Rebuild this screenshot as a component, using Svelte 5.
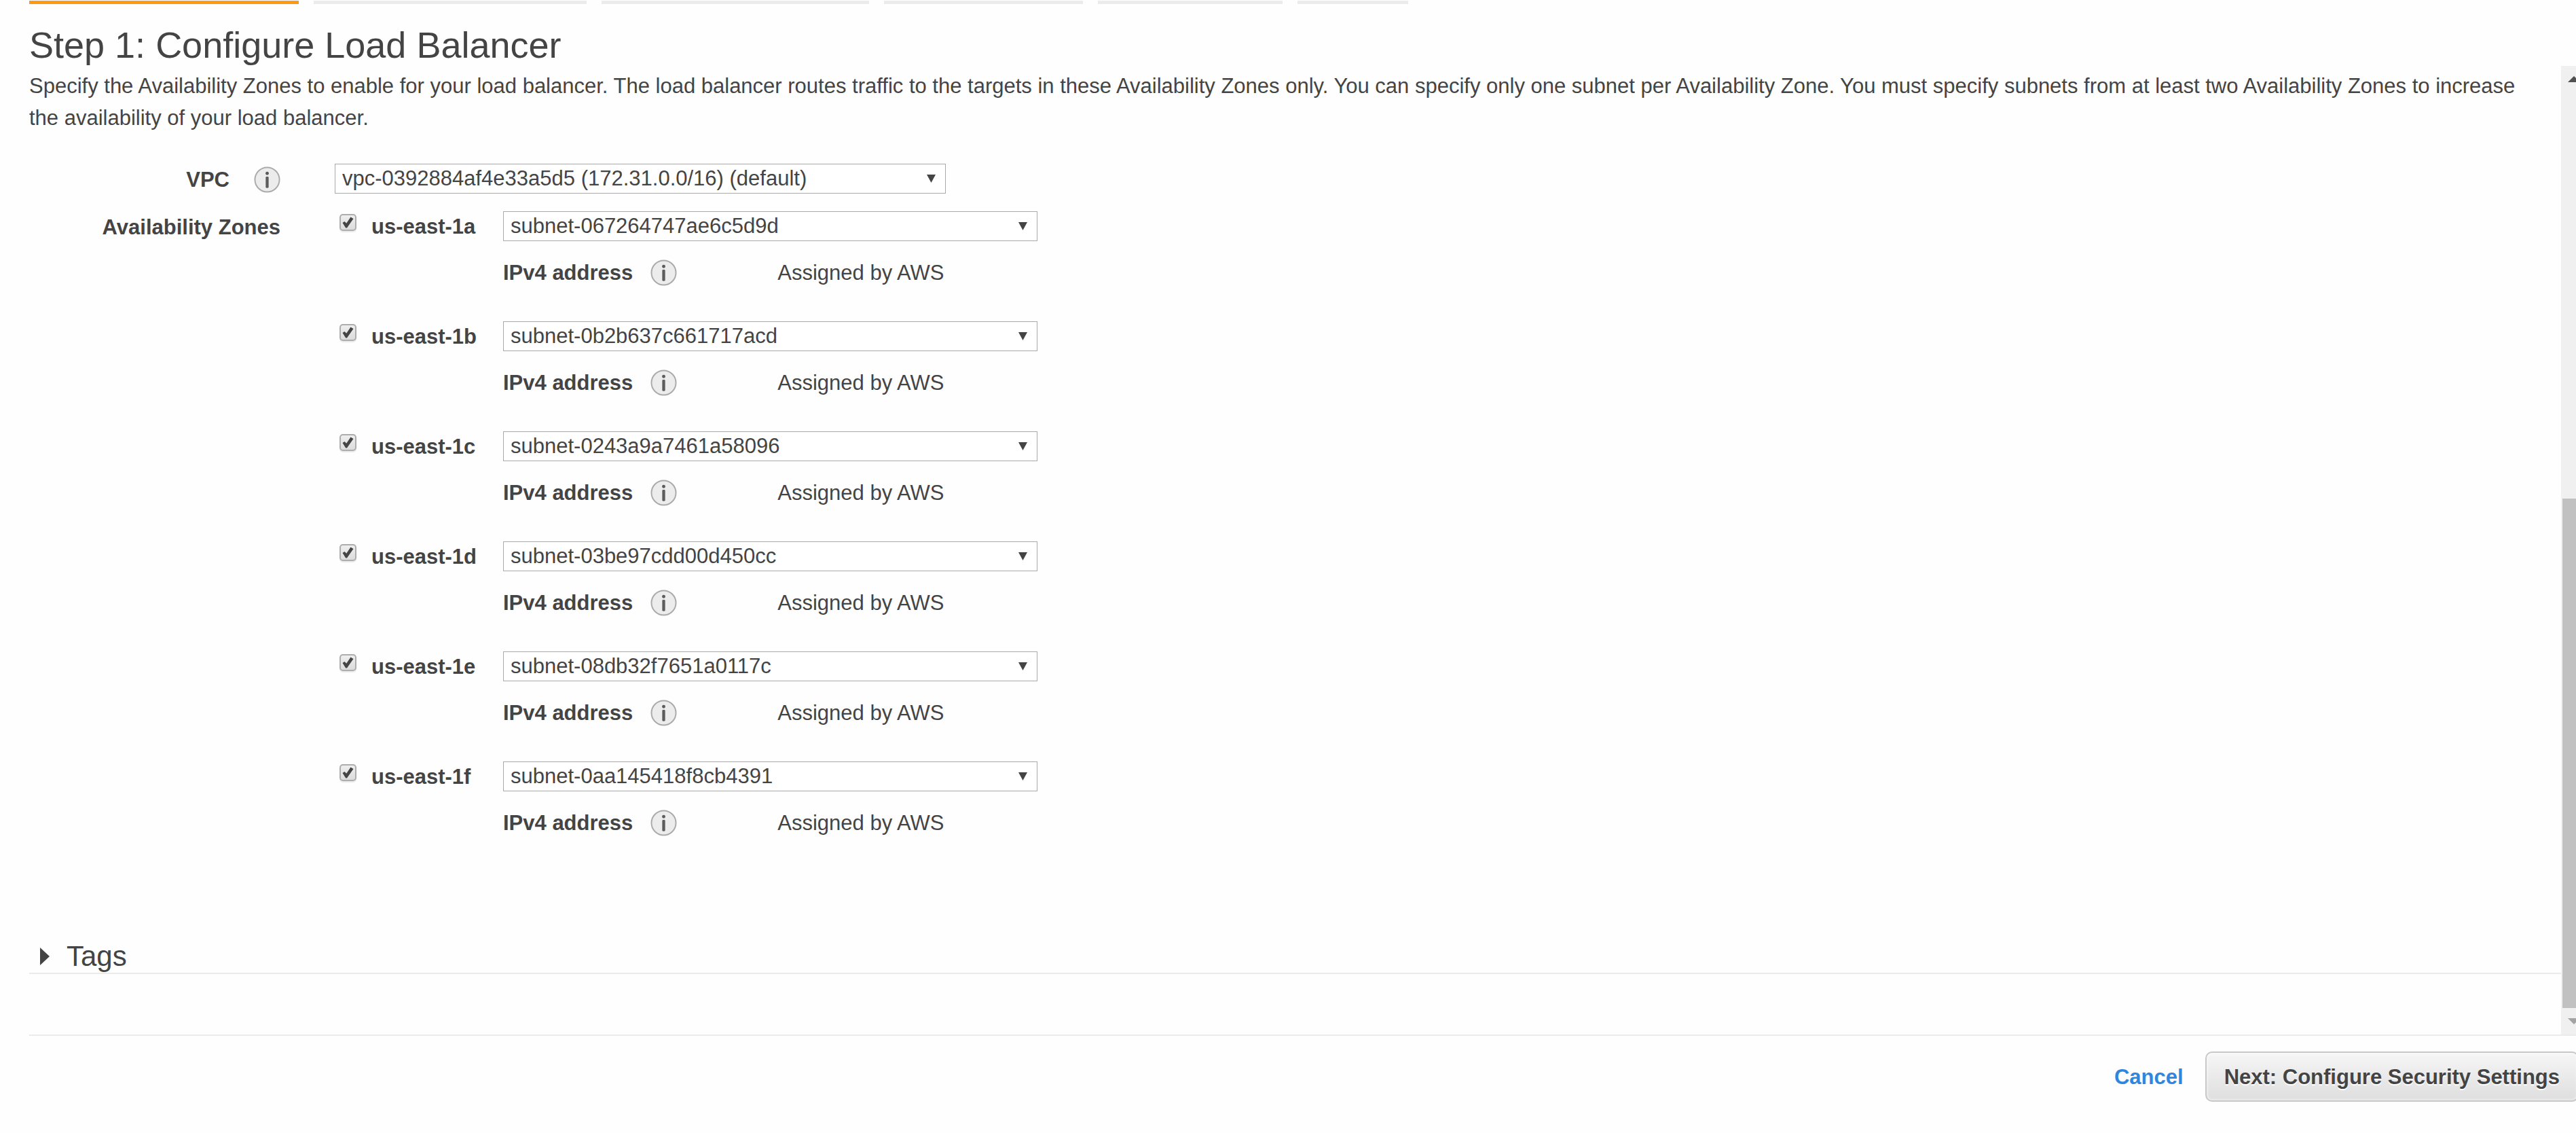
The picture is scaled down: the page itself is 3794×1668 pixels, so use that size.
<script>
  const steps = [397, 402, 394, 293, 272, 163];
  const zones = [
    { name: 'us-east-1a', subnet: 'subnet-067264747ae6c5d9d' },
    { name: 'us-east-1b', subnet: 'subnet-0b2b637c661717acd' },
    { name: 'us-east-1c', subnet: 'subnet-0243a9a7461a58096' },
    { name: 'us-east-1d', subnet: 'subnet-03be97cdd00d450cc' },
    { name: 'us-east-1e', subnet: 'subnet-08db32f7651a0117c' },
    { name: 'us-east-1f', subnet: 'subnet-0aa145418f8cb4391' }
  ];
</script>

{#snippet info(label)}
  <button type="button" class="info" aria-label={label}>
    <svg viewBox="0 0 40 40" aria-hidden="true">
      <circle cx="20" cy="20" r="18.500" fill="#ececec" stroke="#aaa" stroke-width="2" />
      <circle cx="20" cy="10.500" r="2.500" fill="#5c5c5c" />
      <rect x="17.800" y="15.500" width="4.400" height="17" rx="1.500" fill="#5c5c5c" />
    </svg>
  </button>
{/snippet}

{#snippet picker(id, label, value)}
  <div class="picker">
    <select {id} aria-label={label}>
      <option>{value}</option>
    </select>
    <svg viewBox="0 0 13 12" aria-hidden="true"><path d="M0 0H13L6.500 12Z" fill="#444" /></svg>
  </div>
{/snippet}

<div class="page">
  <nav class="steps" aria-label="Wizard steps">
    {#each steps as width, i}
      <span class="step" class:active={i === 0} style="width: {width}px"></span>
    {/each}
  </nav>
  <h1>Step 1: Configure Load Balancer</h1>

  <div class="body">
    <main>
      <p class="intro">
        Specify the Availability Zones to enable for your load balancer. The load balancer routes traffic to the targets in these Availability Zones only. You can specify only one subnet per Availability Zone. You must specify subnets from at least two Availability Zones to increase the availability of your load balancer.
      </p>

      <div class="form">
        <div class="field">
          <div class="label"><label for="vpc">VPC</label>{@render info('About VPC')}</div>
          <div class="vpc">{@render picker('vpc', 'VPC', 'vpc-0392884af4e33a5d5 (172.31.0.0/16) (default)')}</div>
        </div>
        <div class="field">
          <div class="label">Availability Zones</div>
          <ul class="zones">
            {#each zones as zone}
              <li class="zone">
                <span class="check">
                  <input type="checkbox" id={zone.name} checked />
                  <svg viewBox="0 0 25 25" aria-hidden="true">
                    <path d="M4.500 13L7.500 11L10.200 13.800L16.500 4.500L20.500 7L11 20.500H9.200Z" fill="#444" />
                  </svg>
                </span>
                <label class="name" for={zone.name}>{zone.name}</label>
                {@render picker(zone.name + '-subnet', zone.name + ' subnet', zone.subnet)}
                <div class="address">
                  <strong>IPv4 address</strong>
                  {@render info('About IPv4 address')}
                  <span class="assigned">Assigned by AWS</span>
                </div>
              </li>
            {/each}
          </ul>
        </div>
      </div>

      <button type="button" class="tags" aria-expanded="false">
        <svg viewBox="0 0 14 26" aria-hidden="true"><path d="M0 0L14 13L0 26Z" fill="#444" /></svg>
        Tags
      </button>
    </main>

    <div class="scrollbar" aria-hidden="true">
      <svg class="up" viewBox="0 0 12 9"><path d="M0 9L9 0L18 9Z" fill="#505050" /></svg>
      <div class="thumb"></div>
      <svg class="down" viewBox="0 0 12 9"><path d="M0 0L9 9L18 0Z" fill="#a3a3a3" /></svg>
    </div>
  </div>

  <footer>
    <a href="#cancel">Cancel</a>
    <button type="button" class="next">Next: Configure Security Settings</button>
  </footer>
</div>

<style>
  :global(body) {
    margin: 0;
    background: #fefefe;
  }
  .page {
    display: flex;
    flex-direction: column;
    font: 31px/47px "Liberation Sans", Arial, sans-serif;
    color: #444;
    min-height: 100vh;
    padding-top: 1px;
    box-sizing: border-box;
    overflow: hidden;
  }
  .steps {
    display: flex;
    gap: 22px;
    padding-left: 43px;
  }
  .step {
    height: 5px;
    background: #ebebeb;
  }
  .step.active {
    background: #ff9914;
  }
  h1 {
    margin: 0;
    padding: 29px 0 0 43px;
    font-size: 54px;
    line-height: 62px;
    font-weight: 400;
  }
  .body {
    display: flex;
    flex: 1;
  }
  main {
    flex: 1;
    padding: 0 0 44px 43px;
    display: flex;
    flex-direction: column;
  }
  .intro {
    margin: 6px 0 44px;
    padding-right: 24px;
  }
  .form {
    display: grid;
    gap: 24px;
  }
  .field {
    display: grid;
    grid-template-columns: 370px 1fr;
    column-gap: 80px;
  }
  .label {
    display: flex;
    justify-content: flex-end;
    align-items: center;
    gap: 36px;
    height: 46px;
    font-weight: 700;
  }
  .vpc {
    width: 900px;
  }
  .info {
    border: 0;
    padding: 0;
    background: none;
    width: 39px;
    height: 39px;
  }
  .info svg {
    display: block;
    width: 100%;
    height: 100%;
  }
  .picker {
    display: grid;
    align-items: center;
    height: 44px;
  }
  .picker > * {
    grid-area: 1 / 1;
  }
  .picker svg {
    width: 13px;
    height: 12px;
    margin-right: 15px;
    justify-self: end;
    pointer-events: none;
  }
  select {
    appearance: none;
    width: 100%;
    height: 44px;
    margin: 0;
    padding: 0 40px 0 10px;
    border: 1px solid #a9a9a9;
    border-radius: 0;
    background: #fff;
    color: #444;
    font: inherit;
    line-height: 42px;
  }
  .zones {
    list-style: none;
    margin: 0;
    padding: 0 0 0 7px;
    display: grid;
    gap: 48px;
  }
  .zone {
    display: grid;
    grid-template-columns: 25px 172px 787px;
    grid-template-rows: 44px 47px;
    row-gap: 23px;
    column-gap: 22px;
  }
  .check {
    display: grid;
    align-content: start;
    padding-top: 4px;
  }
  .check > * {
    grid-area: 1 / 1;
    width: 25px;
    height: 25px;
  }
  .check svg {
    pointer-events: none;
    z-index: 1;
  }
  .check input {
    appearance: none;
    margin: 0;
    box-sizing: border-box;
    border: 2px solid #adadad;
    border-radius: 5px;
    background: linear-gradient(#eee, #dcdcdc);
    box-shadow: 0 2px 1px #eaeaea;
  }
  .name {
    font-weight: 700;
    line-height: 46px;
  }
  .address {
    grid-column: 3;
    display: flex;
    align-items: center;
    gap: 26px;
  }
  .assigned {
    margin-left: 122px;
  }
  .tags {
    display: flex;
    align-items: center;
    gap: 25px;
    margin-top: 149px;
    padding: 0 0 0 16px;
    border: 0;
    border-bottom: 2px solid #ebebeb;
    background: none;
    color: inherit;
    font: 42px/48px "Liberation Sans", Arial, sans-serif;
  }
  .tags svg {
    width: 14px;
    height: 26px;
  }
  .scrollbar {
    width: 22px;
    background: #f0f0f0;
    display: flex;
    flex-direction: column;
    align-items: flex-end;
  }
  .scrollbar svg {
    width: 12px;
    height: 9px;
  }
  .up {
    margin-top: 15px;
  }
  .thumb {
    width: 20px;
    height: 750px;
    margin: auto 0 15px;
    background: #c1c1c1;
  }
  .down {
    margin-bottom: 15px;
  }
  footer {
    margin-left: 43px;
    border-top: 2px solid #ebebeb;
    padding: 23px 0 46px;
    display: flex;
    justify-content: flex-end;
    align-items: center;
    gap: 32px;
    font-weight: 700;
  }
  footer a {
    color: #2e86de;
    text-decoration: none;
  }
  .next {
    box-sizing: border-box;
    height: 74px;
    margin-right: -4px;
    padding: 0 26px;
    border: 2px solid #c8c8c8;
    border-radius: 10px;
    background: linear-gradient(#f6f6f6, #dedede);
    box-shadow: inset 0 0 4px #fff;
    color: #444;
    font: inherit;
    text-shadow: 0 2px 0 #fff;
  }
</style>
